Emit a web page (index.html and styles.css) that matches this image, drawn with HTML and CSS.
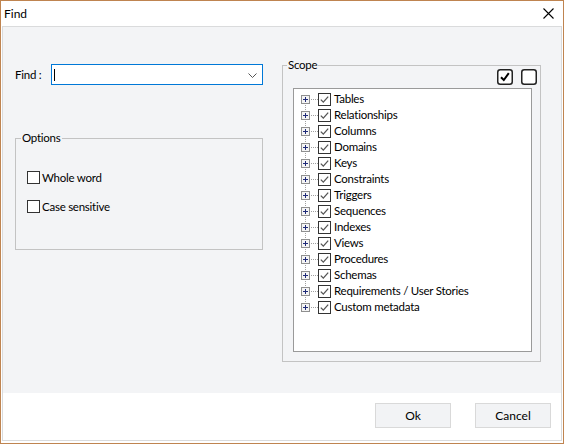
FILE: index.html
```html
<!DOCTYPE html>
<html>
<head>
<meta charset="utf-8">
<title>Find</title>
<link rel="stylesheet" href="styles.css">
</head>
<body>
<div class="window">
  <div class="titlebar">
    <span class="title">Find</span>
    <svg class="close" width="11" height="11" viewBox="0 0 11 11"><path d="M0.5 0.5 L10.5 10.5 M10.5 0.5 L0.5 10.5" stroke="#000" stroke-width="1.1" fill="none"/></svg>
  </div>
  <div class="client">
    <div class="panel">
      <div class="left">
        <div class="find-row">
          <span class="find-label">Find :</span>
          <div class="combo">
            <span class="caret"></span>
            <svg class="chevron" width="9" height="5" viewBox="0 0 9 5"><path d="M0.5 0.5 L4.5 4.5 L8.5 0.5" stroke="#555" stroke-width="1" fill="none"/></svg>
          </div>
        </div>
        <fieldset class="group options">
          <legend>Options</legend>
          <div class="options-body">
            <div class="check"><span class="box"></span><span>Whole word</span></div>
            <div class="check"><span class="box"></span><span>Case sensitive</span></div>
          </div>
        </fieldset>
      </div>
      <fieldset class="group scope">
        <legend>Scope</legend>
        <div class="scope-body">
          <div class="tools">
            <svg width="16" height="16" viewBox="0 0 16 16"><rect x="0.75" y="0.75" width="14.5" height="14.5" rx="2.5" fill="#fff" stroke="#222" stroke-width="1.5"/><path d="M4 8.2 L6.8 11 L11.8 4.2" stroke="#000" stroke-width="2" fill="none"/></svg>
            <svg width="16" height="16" viewBox="0 0 16 16"><rect x="0.75" y="0.75" width="14.5" height="14.5" rx="2.5" fill="#fff" stroke="#222" stroke-width="1.5"/></svg>
          </div>
          <div class="tree">
            <div class="node first"><svg class="exp" width="24" height="16" viewBox="0 0 24 16"><path class="vl" d="M11.5 8 V16"/><path class="hl" d="M17 8.5 H24"/><rect class="pbox" x="7.5" y="4.5" width="8" height="8"/><path class="plus" d="M9 8.5 H14 M11.5 6 V11"/></svg><svg class="cb" width="13" height="13" viewBox="0 0 13 13"><rect x="0.5" y="0.5" width="12" height="12"/><path d="M2.8 6.6 L5.3 9.1 L10.2 3.6"/></svg><span class="label">Tables</span></div>
            <div class="node"><svg class="exp" width="24" height="16" viewBox="0 0 24 16"><path class="vl" d="M11.5 0 V16"/><path class="hl" d="M17 8.5 H24"/><rect class="pbox" x="7.5" y="4.5" width="8" height="8"/><path class="plus" d="M9 8.5 H14 M11.5 6 V11"/></svg><svg class="cb" width="13" height="13" viewBox="0 0 13 13"><rect x="0.5" y="0.5" width="12" height="12"/><path d="M2.8 6.6 L5.3 9.1 L10.2 3.6"/></svg><span class="label">Relationships</span></div>
            <div class="node"><svg class="exp" width="24" height="16" viewBox="0 0 24 16"><path class="vl" d="M11.5 0 V16"/><path class="hl" d="M17 8.5 H24"/><rect class="pbox" x="7.5" y="4.5" width="8" height="8"/><path class="plus" d="M9 8.5 H14 M11.5 6 V11"/></svg><svg class="cb" width="13" height="13" viewBox="0 0 13 13"><rect x="0.5" y="0.5" width="12" height="12"/><path d="M2.8 6.6 L5.3 9.1 L10.2 3.6"/></svg><span class="label">Columns</span></div>
            <div class="node"><svg class="exp" width="24" height="16" viewBox="0 0 24 16"><path class="vl" d="M11.5 0 V16"/><path class="hl" d="M17 8.5 H24"/><rect class="pbox" x="7.5" y="4.5" width="8" height="8"/><path class="plus" d="M9 8.5 H14 M11.5 6 V11"/></svg><svg class="cb" width="13" height="13" viewBox="0 0 13 13"><rect x="0.5" y="0.5" width="12" height="12"/><path d="M2.8 6.6 L5.3 9.1 L10.2 3.6"/></svg><span class="label">Domains</span></div>
            <div class="node"><svg class="exp" width="24" height="16" viewBox="0 0 24 16"><path class="vl" d="M11.5 0 V16"/><path class="hl" d="M17 8.5 H24"/><rect class="pbox" x="7.5" y="4.5" width="8" height="8"/><path class="plus" d="M9 8.5 H14 M11.5 6 V11"/></svg><svg class="cb" width="13" height="13" viewBox="0 0 13 13"><rect x="0.5" y="0.5" width="12" height="12"/><path d="M2.8 6.6 L5.3 9.1 L10.2 3.6"/></svg><span class="label">Keys</span></div>
            <div class="node"><svg class="exp" width="24" height="16" viewBox="0 0 24 16"><path class="vl" d="M11.5 0 V16"/><path class="hl" d="M17 8.5 H24"/><rect class="pbox" x="7.5" y="4.5" width="8" height="8"/><path class="plus" d="M9 8.5 H14 M11.5 6 V11"/></svg><svg class="cb" width="13" height="13" viewBox="0 0 13 13"><rect x="0.5" y="0.5" width="12" height="12"/><path d="M2.8 6.6 L5.3 9.1 L10.2 3.6"/></svg><span class="label">Constraints</span></div>
            <div class="node"><svg class="exp" width="24" height="16" viewBox="0 0 24 16"><path class="vl" d="M11.5 0 V16"/><path class="hl" d="M17 8.5 H24"/><rect class="pbox" x="7.5" y="4.5" width="8" height="8"/><path class="plus" d="M9 8.5 H14 M11.5 6 V11"/></svg><svg class="cb" width="13" height="13" viewBox="0 0 13 13"><rect x="0.5" y="0.5" width="12" height="12"/><path d="M2.8 6.6 L5.3 9.1 L10.2 3.6"/></svg><span class="label">Triggers</span></div>
            <div class="node"><svg class="exp" width="24" height="16" viewBox="0 0 24 16"><path class="vl" d="M11.5 0 V16"/><path class="hl" d="M17 8.5 H24"/><rect class="pbox" x="7.5" y="4.5" width="8" height="8"/><path class="plus" d="M9 8.5 H14 M11.5 6 V11"/></svg><svg class="cb" width="13" height="13" viewBox="0 0 13 13"><rect x="0.5" y="0.5" width="12" height="12"/><path d="M2.8 6.6 L5.3 9.1 L10.2 3.6"/></svg><span class="label">Sequences</span></div>
            <div class="node"><svg class="exp" width="24" height="16" viewBox="0 0 24 16"><path class="vl" d="M11.5 0 V16"/><path class="hl" d="M17 8.5 H24"/><rect class="pbox" x="7.5" y="4.5" width="8" height="8"/><path class="plus" d="M9 8.5 H14 M11.5 6 V11"/></svg><svg class="cb" width="13" height="13" viewBox="0 0 13 13"><rect x="0.5" y="0.5" width="12" height="12"/><path d="M2.8 6.6 L5.3 9.1 L10.2 3.6"/></svg><span class="label">Indexes</span></div>
            <div class="node"><svg class="exp" width="24" height="16" viewBox="0 0 24 16"><path class="vl" d="M11.5 0 V16"/><path class="hl" d="M17 8.5 H24"/><rect class="pbox" x="7.5" y="4.5" width="8" height="8"/><path class="plus" d="M9 8.5 H14 M11.5 6 V11"/></svg><svg class="cb" width="13" height="13" viewBox="0 0 13 13"><rect x="0.5" y="0.5" width="12" height="12"/><path d="M2.8 6.6 L5.3 9.1 L10.2 3.6"/></svg><span class="label">Views</span></div>
            <div class="node"><svg class="exp" width="24" height="16" viewBox="0 0 24 16"><path class="vl" d="M11.5 0 V16"/><path class="hl" d="M17 8.5 H24"/><rect class="pbox" x="7.5" y="4.5" width="8" height="8"/><path class="plus" d="M9 8.5 H14 M11.5 6 V11"/></svg><svg class="cb" width="13" height="13" viewBox="0 0 13 13"><rect x="0.5" y="0.5" width="12" height="12"/><path d="M2.8 6.6 L5.3 9.1 L10.2 3.6"/></svg><span class="label">Procedures</span></div>
            <div class="node"><svg class="exp" width="24" height="16" viewBox="0 0 24 16"><path class="vl" d="M11.5 0 V16"/><path class="hl" d="M17 8.5 H24"/><rect class="pbox" x="7.5" y="4.5" width="8" height="8"/><path class="plus" d="M9 8.5 H14 M11.5 6 V11"/></svg><svg class="cb" width="13" height="13" viewBox="0 0 13 13"><rect x="0.5" y="0.5" width="12" height="12"/><path d="M2.8 6.6 L5.3 9.1 L10.2 3.6"/></svg><span class="label">Schemas</span></div>
            <div class="node"><svg class="exp" width="24" height="16" viewBox="0 0 24 16"><path class="vl" d="M11.5 0 V16"/><path class="hl" d="M17 8.5 H24"/><rect class="pbox" x="7.5" y="4.5" width="8" height="8"/><path class="plus" d="M9 8.5 H14 M11.5 6 V11"/></svg><svg class="cb" width="13" height="13" viewBox="0 0 13 13"><rect x="0.5" y="0.5" width="12" height="12"/><path d="M2.8 6.6 L5.3 9.1 L10.2 3.6"/></svg><span class="label">Requirements / User Stories</span></div>
            <div class="node last"><svg class="exp" width="24" height="16" viewBox="0 0 24 16"><path class="vl" d="M11.5 0 V9"/><path class="hl" d="M17 8.5 H24"/><rect class="pbox" x="7.5" y="4.5" width="8" height="8"/><path class="plus" d="M9 8.5 H14 M11.5 6 V11"/></svg><svg class="cb" width="13" height="13" viewBox="0 0 13 13"><rect x="0.5" y="0.5" width="12" height="12"/><path d="M2.8 6.6 L5.3 9.1 L10.2 3.6"/></svg><span class="label">Custom metadata</span></div>
          </div>
        </div>
      </fieldset>
    </div>
    <div class="footer">
      <button class="btn">Ok</button>
      <button class="btn">Cancel</button>
    </div>
  </div>
</div>
</body>
</html>
```

FILE: styles.css
```css
* { box-sizing: border-box; }
html, body { margin: 0; padding: 0; background: #fff; }
body {
  font-family: Lato, "Noto Sans", "Liberation Sans", sans-serif;
  font-size: 11.5px;
  letter-spacing: -0.25px;
  color: #000;
}
.window {
  width: 564px;
  height: 444px;
  border: 1px solid #bf8450;
  background: #fff;
  display: flex;
  flex-direction: column;
}
.titlebar {
  height: 25px;
  flex: none;
  display: flex;
  align-items: center;
  justify-content: space-between;
  padding: 0 9px 0 3px;
}
.title { line-height: 16px; font-size: 12px; letter-spacing: 0; }
.close { display: block; }
.client {
  flex: 1;
  margin: 0 1px 2px 1px;
  border: 1px solid #dadbdc;
  display: flex;
  flex-direction: column;
}
.panel {
  height: 366px;
  flex: none;
  background: #f3f4f6;
  padding: 31px 0 0 12px;
  display: grid;
  grid-template-columns: 248px 259px;
  column-gap: 19px;
  align-items: start;
}
.left { display: flex; flex-direction: column; }
.find-row {
  display: flex;
  align-items: center;
  height: 21px;
  margin-top: 6px;
}
.find-label { width: 36px; line-height: 16px; }
.combo {
  width: 212px;
  height: 21px;
  border: 1px solid #0078d7;
  background: #fff;
  display: flex;
  align-items: center;
  justify-content: space-between;
  padding: 0 5px 0 2px;
}
.caret { width: 1px; height: 12px; background: #000; }
.chevron { display: block; margin-top: 1px; }
.group {
  margin: 0;
  padding: 0;
  border: 1px solid #c3c3c3;
  min-width: 0;
}
.group legend {
  padding: 0 1px;
  line-height: 14px;
}
.options {
  margin-top: 46px;
  height: 119px;
}
.options legend { margin-left: 5px; }
.options-body {
  padding: 25px 0 0 11px;
  display: flex;
  flex-direction: column;
  gap: 14px;
}
.check {
  display: flex;
  align-items: center;
  height: 15px;
  line-height: 15px;
}
.check .box {
  width: 13px;
  height: 13px;
  border: 1px solid #333;
  background: #fff;
  margin-right: 2px;
  flex: none;
}
.scope { height: 304px; }
.scope legend { margin-left: 4px; }
.scope-body { padding: 0 8px 0 10px; }
.tools {
  display: flex;
  justify-content: flex-end;
  gap: 8px;
  height: 16px;
  margin-top: -3px;
  margin-right: -5px;
}
.tools svg { display: block; }
.tree {
  margin-top: 3px;
  height: 264px;
  border: 1px solid #9a9a9a;
  background: #fff;
  padding-top: 2px;
}
.node {
  display: flex;
  align-items: center;
  height: 16px;
  line-height: 16px;
}
.exp { display: block; flex: none; shape-rendering: crispEdges; }
.exp .vl, .exp .hl {
  stroke: #a0a0a0;
  stroke-width: 1;
  stroke-dasharray: 1 1;
  fill: none;
}
.exp .pbox { fill: #f4f4f4; stroke: #8f8f8f; stroke-width: 1; }
.exp .plus { stroke: #1f2a78; stroke-width: 1; fill: none; }
.cb { display: block; flex: none; }
.cb rect { fill: #fff; stroke: #333; stroke-width: 1; }
.cb path { fill: none; stroke: #555; stroke-width: 1.3; }
.label { margin-left: 3px; white-space: nowrap; }
.footer {
  flex: 1;
  background: #fff;
  display: flex;
  justify-content: flex-end;
  align-items: flex-start;
  gap: 24px;
  padding: 10px 10px 0 0;
}
.btn {
  width: 76px;
  height: 25px;
  border: 1px solid #d9d9d9;
  background: #f2f3f5;
  font-family: inherit;
  font-size: 12px;
  letter-spacing: 0;
  color: #000;
  padding: 0;
  margin: 0;
}
```
